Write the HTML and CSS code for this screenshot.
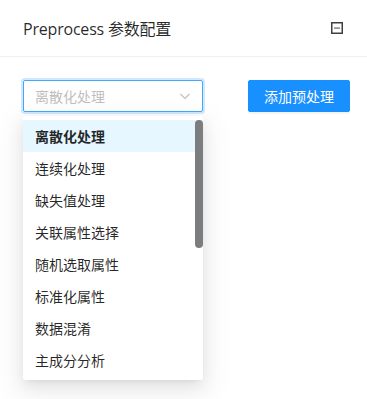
FILE: index.html
```html
<!DOCTYPE html>
<html lang="zh">
<head>
<meta charset="utf-8">
<link rel="stylesheet" href="styles.css">
</head>
<body>
<div class="card">
  <div class="card-head">
    <span class="title">Preprocess 参数配置</span>
    <svg class="collapse" width="14" height="14" viewBox="0 0 14 14">
      <rect x="1.75" y="1.75" width="10.5" height="10.5" fill="none" stroke="#404040" stroke-width="1.5"/>
      <rect x="4" y="6.3" width="6" height="1.6" fill="#8c8c8c"/>
    </svg>
  </div>
  <div class="card-body">
    <div class="select-col">
      <div class="select">
        <span class="placeholder">离散化处理</span>
        <svg class="arrow" width="12" height="12" viewBox="0 0 12 12">
          <path d="M1.5 4 L6 8.5 L10.5 4" fill="none" stroke="#bfbfbf" stroke-width="1.1"/>
        </svg>
      </div>
      <div class="dropdown">
        <div class="option active">离散化处理</div>
        <div class="option">连续化处理</div>
        <div class="option">缺失值处理</div>
        <div class="option">关联属性选择</div>
        <div class="option">随机选取属性</div>
        <div class="option">标准化属性</div>
        <div class="option">数据混淆</div>
        <div class="option">主成分分析</div>
        <div class="thumb"></div>
      </div>
    </div>
    <button class="btn">添加预处理</button>
  </div>
</div>
</body>
</html>
```
FILE: styles.css
```css
* { box-sizing: border-box; }
html, body {
  margin: 0;
  background: #fff;
  font-family: "Noto Sans", "Noto Sans CJK SC", sans-serif;
  color: rgba(0,0,0,.85);
}
.card-head {
  height: 57px;
  border-bottom: 1px solid #f0f0f0;
  display: flex;
  align-items: center;
  justify-content: space-between;
  padding: 0 23px 1px 23px;
}
.title {
  font-size: 16px;
  letter-spacing: -0.2px;
  font-family: "Open Sans", "Noto Sans CJK SC", sans-serif;
}
.card-body {
  display: flex;
  align-items: flex-start;
  gap: 45px;
  padding: 23px 23px;
}
.select-col {
  display: flex;
  flex-direction: column;
  gap: 4px;
  width: 180px;
  flex-shrink: 0;
}
.select {
  height: 32px;
  border: 1px solid #40a9ff;
  border-radius: 2px;
  box-shadow: 0 0 0 2px rgba(24,144,255,.2);
  display: flex;
  align-items: center;
  justify-content: space-between;
  padding: 0 11px;
}
.placeholder {
  font-size: 14px;
  color: #bfbfbf;
  font-family: "Noto Sans CJK SC", sans-serif;
}
.dropdown {
  position: relative;
  padding: 4px 0;
  border-radius: 2px;
  background: #fff;
  box-shadow: 0 3px 6px -4px rgba(0,0,0,.12), 0 6px 16px 0 rgba(0,0,0,.08), 0 9px 28px 8px rgba(0,0,0,.05);
}
.option {
  height: 32px;
  line-height: 32px;
  padding: 0 12px;
  font-size: 14px;
  font-family: "Noto Sans CJK SC", sans-serif;
  color: rgba(0,0,0,.85);
}
.option.active {
  background: #e6f7ff;
  font-weight: 600;
}
.thumb {
  position: absolute;
  right: 0;
  top: 4px;
  width: 8px;
  height: 128px;
  border-radius: 4px;
  background: #7b7d7e;
}
.btn {
  flex-shrink: 0;
  white-space: nowrap;
  height: 32px;
  padding: 0 15px;
  border: 1px solid #1890ff;
  background: #1890ff;
  color: #fff;
  border-radius: 2px;
  font-size: 14px;
  font-family: "Noto Sans CJK SC", sans-serif;
  box-shadow: 0 2px 0 rgba(0,0,0,.045);
}
```
